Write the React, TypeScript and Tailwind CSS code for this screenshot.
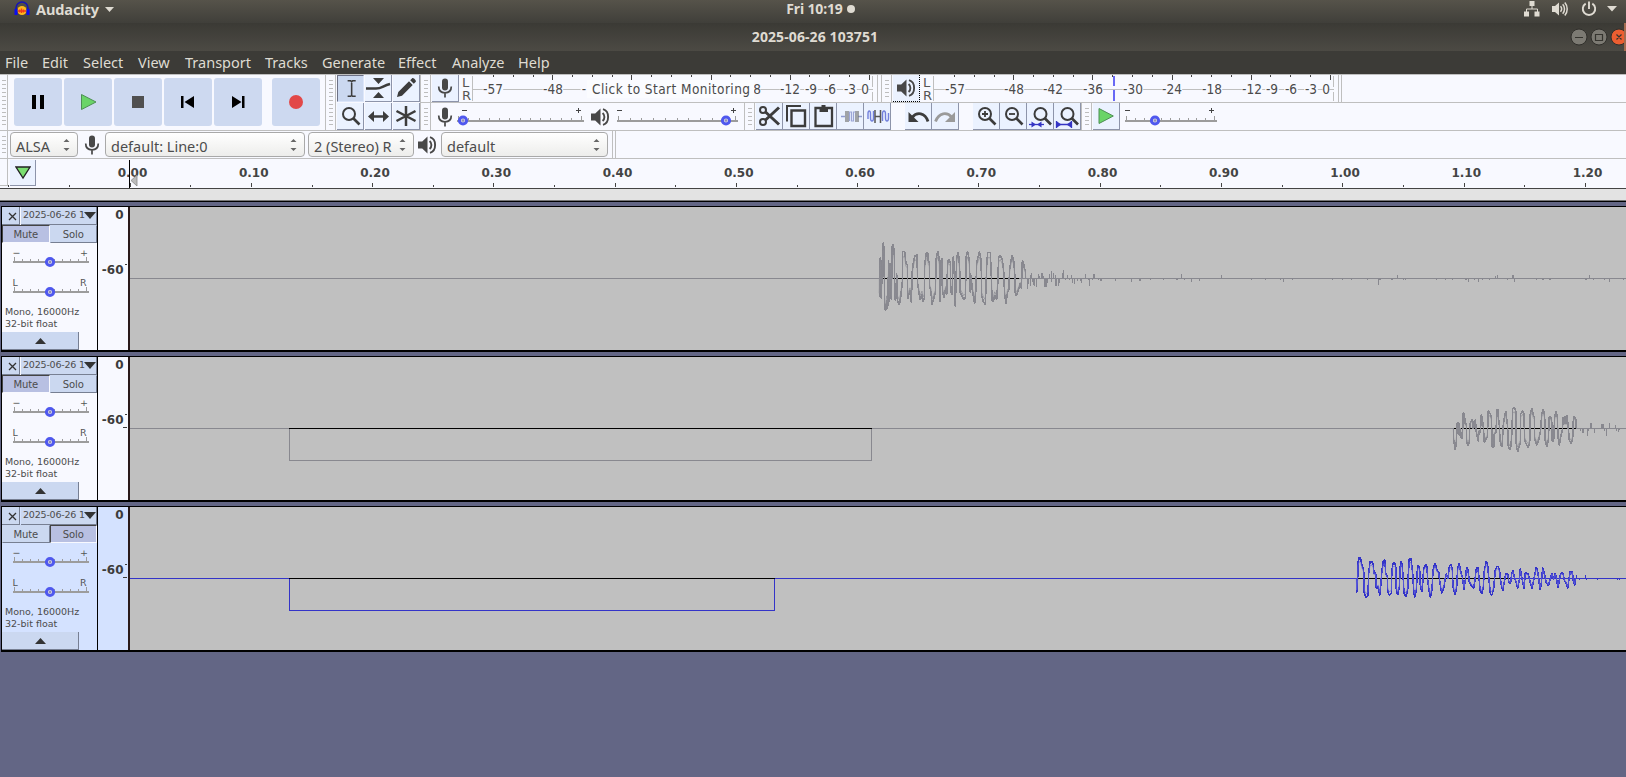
import clsx from "clsx";
import type { ReactNode } from "react";

type Bar = [x: number, dy: number, w?: number];

const menuItems = [
  { label: "File", width: "w-[37px]" },
  { label: "Edit", width: "w-[41px]" },
  { label: "Select", width: "w-[55px]" },
  { label: "View", width: "w-[47px]" },
  { label: "Transport", width: "w-[80px]" },
  { label: "Tracks", width: "w-[57px]" },
  { label: "Generate", width: "w-[76px]" },
  { label: "Effect", width: "w-[54px]" },
  { label: "Analyze", width: "w-[66px]" },
  { label: "Help", width: "w-[40px]" },
];

// Waveform points use three units per pixel, relative to (originX, zero line)
const speechA =
  "58,0 58,55 61,-63 64,61 68,-97 70,-108 72,-87 74,90 77,97 80,65 83,90 86,-55 88,70 91,-47 94,65 97,-100 100,-102 103,-70 104,55 107,67 110,-15 112,65 118,79 122,57 127,10 128,-81 134,-81 138,-45 142,-40 143,61 150,35 154,72 157,-25 160,-47 164,-67 171,-72 173,15 177,43 181,64 186,47 189,70 193,59 194,-39 199,-78 203,-77 205,-53 208,-47 209,25 213,40 216,79 221,60 226,45 229,-65 234,-83 238,-53 239,41 241,71 244,-57 247,-59 248,40 252,59 257,30 260,50 263,-48 266,-57 271,-47 272,35 276,49 280,-67 283,-30 286,85 290,-60 293,-78 296,-70 299,-35 300,40 305,50 311,64 316,57 319,-69 323,-81 328,-53 331,43 334,-10 336,30 344,75 348,30 350,-47 358,-81 362,-65 364,-20 365,53 370,69 376,79 380,-37 383,-78 391,-78 394,-5 396,65 400,70 404,50 410,65 413,20 416,-62 421,-71 427,-55 431,-25 434,50 438,75 443,40 446,37 449,-27 453,-55 457,-69 461,-53 464,-20 466,47 469,52 475,35 481,15 484,30 487,-53 490,-50 494,-27 496,-27 497,0";

const speechB =
  "70,0 71,35 74,55 76,63 79,40 82,-18 86,-18 88,22 91,0 94,28 97,30 100,-48 103,-45 106,-12 109,-15 110,40 114,51 118,40 119,0 121,-18 126,-27 128,-27 129,0 133,-5 136,-27 139,10 145,39 147,7 151,13 154,-42 157,-30 160,-5 163,42 169,30 172,25 175,-54 180,-45 184,-35 187,57 191,57 193,15 198,13 201,-55 203,-59 205,-37 208,-10 210,35 214,53 217,55 219,-5 222,-27 227,-53 230,-30 233,-5 234,50 239,65 243,53 246,5 248,-60 254,-62 258,-50 259,53 263,70 268,53 271,45 272,-43 278,-53 282,-43 284,35 290,50 295,57 299,45 301,-45 306,-62 310,-40 313,-35 314,30 320,51 326,35 332,5 335,-43 340,-58 344,-40 345,35 351,55 355,35 358,-37 362,-35 365,-25 367,40 371,35 374,-35 378,-53 382,-35 384,25 388,51 392,25 397,5 400,-35 402,-15 405,-37 408,-15 411,-39 414,-13 415,3 418,35 424,45 428,30 430,-25 433,-37 437,-30 439,0";

const speechC =
  "79,0 80,43 83,5 84,-50 88,-63 92,-60 96,-40 101,-25 103,45 108,57 114,50 116,-15 120,-50 126,-50 130,-40 132,-15 137,-18 139,30 145,25 149,51 152,25 155,-15 160,-53 165,-55 167,-15 172,-5 173,35 177,50 184,45 185,-5 188,-43 193,-47 197,-40 199,35 203,50 208,25 211,-40 214,-53 217,-35 220,5 222,45 228,55 233,35 235,-15 238,-60 243,-60 248,-15 251,35 254,57 259,35 262,-25 265,-40 269,-30 270,15 275,40 278,15 281,-30 287,-42 291,-35 293,5 297,35 301,57 306,35 309,-25 315,-47 321,-25 326,-20 330,15 335,45 342,25 345,5 349,-15 354,0 358,-35 363,-43 367,-25 369,25 375,50 380,25 383,-30 388,-47 391,-25 397,-5 402,33 406,5 410,-35 414,-25 418,10 425,23 431,30 435,5 438,-25 443,-35 447,-5 450,35 455,47 460,25 463,-25 469,-53 473,-40 477,5 481,45 486,50 491,30 496,-25 500,-35 505,-37 509,-20 513,15 518,37 523,10 527,-13 533,-13 537,13 542,13 545,-15 549,-25 553,-5 558,10 563,30 568,5 571,-30 574,-10 578,10 582,30 586,-17 595,-13 600,10 606,30 610,10 615,-15 619,-35 624,-17 630,35 634,15 638,-33 643,-15 648,10 655,23 660,5 666,-17 671,3 676,-17 680,5 684,28 688,5 692,-15 699,-17 703,5 708,13 713,30 717,3 721,-23 724,-15 727,-23 730,7 734,21 736,0";

const tailA: Bar[] = [
  [502, 31], [506, 18], [511, -12], [511, 22], [515, -18], [517, 10], [520, 20], [525, 22], [529, 26], [535, -15],
  [539, -8], [546, -18, 6], [550, -8], [554, 25], [559, 25, 6], [563, 14], [569, -15], [574, -24], [576, 12], [582, -18],
  [586, -12], [587, 22, 6], [595, 22], [598, 15], [607, -18], [610, -27], [616, 6], [622, -12], [628, 6], [634, -12],
  [638, 15], [643, 17], [652, 9], [661, 8], [664, 13], [676, -15], [685, 6], [688, 22], [697, 5], [702, -13, 6],
  [715, 6], [722, 7, 6], [766, 7], [814, 10], [839, 7, 6], [871, 4], [911, 6], [950, 6, 6], [973, 6], [995, 12],
  [1018, 9], [964, -15], [1084, -12], [1174, 6], [1216, 6], [1261, 6], [1270, 12], [1297, 6], [1419, 6], [1447, 6],
  [1474, 6], [1522, 6], [1555, 21], [1560, 6, 6], [1596, 6, 6], [1612, -12], [1630, 6], [1636, 6], [1729, 4],
  [1756, 6], [1777, 6], [1817, 6, 6], [1825, 12], [1843, 6], [1855, 12], [1867, 6], [1888, 6], [1906, -9],
  [1912, -12], [1942, 6], [1959, -12, 6], [1963, 12], [2029, 6], [2048, 6, 6], [2069, 6, 6], [2177, 6, 6],
  [2188, -12], [2200, 6], [2233, 6], [2248, 12], [2290, 6],
];

const tailB: Bar[] = [
  [452, 8], [459, 13, 6], [473, 24], [477, 7], [482, -18, 6], [493, 13], [517, -15, 9], [524, 8], [529, 22],
  [538, -16], [556, -12], [560, 7], [565, 12], [570, 6],
];

const tailC: Bar[] = [[739, -12], [748, 6], [766, -12], [769, 6], [802, 6], [862, 6], [868, 6]];

type Track = {
  id: number;
  muted: boolean;
  solo: boolean;
  selected: boolean;
  color: string;
  rms: string;
  originX: number;
  points: string;
  tail: Bar[];
  voiced: [number, number];
  block?: [number, number];
};

const tracks: Track[] = [
  { id: 1, muted: true, solo: false, selected: false, color: "#88888f", rms: "#8c8c93", originX: 860, points: speechA, tail: tailA, voiced: [883, 1019] },
  { id: 2, muted: true, solo: false, selected: false, color: "#88888f", rms: "#8c8c93", originX: 1430, points: speechB, tail: tailB, voiced: [1454, 1576], block: [289, 871] },
  { id: 3, muted: false, solo: true, selected: true, color: "#3434c8", rms: "#6464dc", originX: 1330, points: speechC, tail: tailC, voiced: [1358, 1512], block: [289, 774] },
];

/* ---------- icons ---------- */

function MicIcon() {
  return (
    <svg width="16" height="20" viewBox="0 0 16 20">
      <rect x="5" y="0.5" width="6" height="12" rx="3" fill="#484848" />
      <path d="M1.7 8.5c0 4 2.6 6.3 6.3 6.3s6.3-2.3 6.3-6.3M8 15v4.5" fill="none" stroke="#484848" strokeWidth="1.7" />
    </svg>
  );
}

function SpeakerIcon() {
  return (
    <svg width="20" height="20" viewBox="0 0 20 20">
      <path d="M1 6.5h4.2L10.5 1.5v17L5.2 13.5H1z" fill="#484848" />
      <path d="M12.6 6c2.4 2 2.4 6 0 8M13 2.2c6.8 2 6.8 13.6 0 15.6" fill="none" stroke="#484848" strokeWidth="1.9" />
    </svg>
  );
}

function PlayIcon({ size = 18 }: { size?: number }) {
  return (
    <svg width={size} height={size} viewBox="0 0 18 18">
      <path d="M2 1.5 16.3 9 2 16.5z" fill="#6ad468" stroke="#4d8f54" strokeWidth="1" />
    </svg>
  );
}

function Magnifier({ children, cx = 12, cy = 11 }: { children?: ReactNode; cx?: number; cy?: number }) {
  return (
    <svg width="26" height="26" viewBox="0 0 26 26">
      <circle cx={cx} cy={cy} r="6" fill="none" stroke="#3c3c3c" strokeWidth="2" />
      <path d={`M${cx + 4} ${cy + 4}l6.500 6.500`} stroke="#3c3c3c" strokeWidth="2.6" />
      {children}
    </svg>
  );
}

function Icon({ children }: { children: ReactNode }) {
  return (
    <svg width="26" height="26" viewBox="0 0 26 26" fill="none" stroke="#3c3c3c" strokeWidth="2">
      {children}
    </svg>
  );
}

/* ---------- toolbar parts ---------- */

function Grip({ tall = false, end = true }: { tall?: boolean; end?: boolean }) {
  return (
    <div className={clsx("flex shrink-0 items-center justify-center border-[#bfbfbf]", tall ? "h-[55px]" : "h-[27px]", end ? "w-[11px] border-x" : "w-2 border-r")}>
      <svg width="4" height={tall ? 46 : 18} shapeRendering="crispEdges">
        {Array.from({ length: tall ? 12 : 5 }, (_, i) => (
          <rect key={i} x="0" y={i * 4} width="4" height="1" fill="#bdbdbd" />
        ))}
      </svg>
    </div>
  );
}

function ToolButton({ children, active = false, dotted = false }: { children: ReactNode; active?: boolean; dotted?: boolean }) {
  return (
    <button
      className={clsx(
        "flex h-[27px] w-[27px] shrink-0 items-center justify-center border-r border-b",
        active ? "border-[#dce6fa] border-t border-l border-t-[#6d7185] border-l-[#6d7185] bg-[#cbd8f0]" : "bg-[#ebf2ff]",
        !active && (dotted ? "border-dotted border-black" : "border-[#8d94aa]"),
      )}
    >
      {children}
    </button>
  );
}

function Slider({ width, start, end, thumb, ticks, minus = 2, plus }: { width: number; start: number; end: number; thumb: number; ticks: number; minus?: number; plus: number }) {
  return (
    <svg className="shrink-0" width={width} height="27" shapeRendering="crispEdges">
      <rect x={minus} y="7" width="5" height="1" fill="#444" />
      <rect x={plus - 2} y="7" width="5" height="1" fill="#444" />
      <rect x={plus} y="5" width="1" height="5" fill="#444" />
      <rect x={start} y="17" width={end - start} height="2" fill="#9c9c9c" />
      {Array.from({ length: ticks }, (_, i) => {
        const major = i === 0 || i === ticks - 1;
        return <rect key={i} x={Math.round(start + 1 + (i * (end - start - 4)) / (ticks - 1))} y={major ? 13 : 15} width="1" height={major ? 4 : 2} fill="#9c9c9c" />;
      })}
      <circle cx={thumb} cy="17.500" r="3.6" fill="#d5d5e5" stroke="#4f58ee" strokeWidth="3" shapeRendering="auto" />
      <circle cx={thumb} cy="17.500" r="1.2" fill="#8d8db8" shapeRendering="auto" />
    </svg>
  );
}

type MeterLabel = [x: number, text: string];

function Meter({ labels, blue, monitor }: { labels: MeterLabel[]; blue?: number; monitor?: boolean }) {
  return (
    <svg className="shrink-0" width="401" height="27" fontFamily='"DejaVu Sans Condensed", "DejaVu Sans"' fontStretch="condensed" fontSize="13.500" fill="#4b4b4b">
      <g shapeRendering="crispEdges">
        <path d="M0.5 1v25M0 14.5h401M400.5 1v11M400.5 17v9" stroke="#bfbfbf" fill="none" />
        {Array.from({ length: 20 }, (_, i) => (
          <rect key={i} x={Math.round(21 + i * 19.78)} y="0" width="1" height={i % 4 === 3 ? 5 : 2} fill="#444" />
        ))}
      </g>
      {labels.map(([x, text]) => (
        <g key={text}>
          <rect x={x - text.length * 3.4} y="6" width={text.length * 6.8} height="15" fill="#f8f9ff" />
          <text x={x} y="18.500" textAnchor="middle">{text}</text>
        </g>
      ))}
      {blue && <path d={`M${blue} 1v10M${blue} 15v11`} stroke="#6969f5" strokeWidth="2" shapeRendering="crispEdges" />}
      {monitor && (
        <g>
          <rect x="115" y="5" width="167" height="18" fill="#fbfcff" />
          <text x="120" y="18.500" textLength="158">Click to Start Monitoring</text>
        </g>
      )}
    </svg>
  );
}

function ChannelLetters() {
  return (
    <div className="flex h-[27px] w-[14px] shrink-0 flex-col justify-center pl-[3px] font-['DejaVu_Sans'] text-[13px] leading-[13px] text-[#555]">
      <span>L</span>
      <span>R</span>
    </div>
  );
}

function Select({ label, width }: { label: string; width: string }) {
  return (
    <div className={clsx("flex h-[25px] shrink-0 items-center justify-between rounded-[4px] border border-[#a9a9a9] bg-linear-to-b from-white to-[#ededeb] pr-[7px] pl-[5px]", width)}>
      <span className="mt-[2px] text-[14.5px] leading-5 whitespace-nowrap text-[#4c4c4c]">{label}</span>
      <svg className="ml-1 shrink-0" width="7" height="14" viewBox="0 0 7 14" fill="#666">
        <path d="M0.5 4 3.5 1l3 3zM0.5 10 3.5 13l3-3z" />
      </svg>
    </div>
  );
}

/* ---------- window chrome ---------- */

function TopBar() {
  return (
    <div className="flex h-[23px] items-center justify-between bg-linear-to-b from-[#56534a] to-[#403f3a] pr-[9px] pb-[5px] pl-[14px] text-[#dfdbd2]">
      <div className="flex w-[300px] items-center">
        <svg width="16" height="16" viewBox="0 0 16 16">
          <path d="M2 11V7a6 6 0 0 1 12 0v4" fill="none" stroke="#1715b5" strokeWidth="1.6" />
          <circle cx="8" cy="9.5" r="4.6" fill="#ffb81c" />
          <path d="M4 10h8M5.5 8.5v3M7.5 7.5v4.5M9.5 8.5v3" stroke="#ef3a1c" strokeWidth="1.4" />
          <path d="M2 8v6M14 8v6" stroke="#0c0cf0" strokeWidth="3" />
        </svg>
        <span className="ml-[6px] text-[14.5px] leading-5 font-bold tracking-[-0.1px]">Audacity</span>
        <svg className="ml-[6px]" width="9" height="5"><path d="M0 0h9L4.5 5z" fill="#dfdbd2" /></svg>
      </div>
      <div className="ml-[10px] flex items-center gap-1 text-[14px] leading-5 font-bold tracking-[-0.15px]">
        Fri 10:19
        <span className="size-2 rounded-full bg-[#dfdbd2]" />
      </div>
      <div className="flex w-[300px] items-center justify-end">
        <svg width="16" height="16" viewBox="0 0 16 16" fill="#dfdbd2">
          <path d="M5.5 0h5v5h-5zM0 10.5h5v5H0zM10.5 10.5h5v5h-5z" />
          <path d="M8 5v3M2.5 11V8h11v3" fill="none" stroke="#dfdbd2" />
        </svg>
        <svg className="ml-3" width="16" height="16" viewBox="0 0 16 16" fill="none" stroke="#dfdbd2" strokeWidth="1.5">
          <path d="M0 5h3l4-3.5v13L3 11H0z" fill="#dfdbd2" stroke="none" />
          <path d="M8.5 5.3c1.3 1.5 1.3 3.9 0 5.4M10.7 3.2c2.4 2.6 2.4 7 0 9.6M12.8 1.5c3.2 3.6 3.2 9.4 0 13" />
        </svg>
        <svg className="ml-[13px]" width="16" height="16" viewBox="0 0 16 16" fill="none" stroke="#dfdbd2" strokeWidth="1.9">
          <path d="M8 0.5v7.5M4.7 2.6a6.2 6.2 0 1 0 6.6 0" />
        </svg>
        <svg className="ml-[10px]" width="10" height="6"><path d="M0 0h10L5 5.5z" fill="#dfdbd2" /></svg>
      </div>
    </div>
  );
}

function TitleBar() {
  return (
    <div className="relative flex h-7 items-center justify-center bg-linear-to-b from-[#3b3a35] to-[#4c4a44] pb-px pl-1 text-[14px] font-bold tracking-[0.1px] text-[#dfdbd2]">
      2025-06-26 103751
      <svg className="absolute top-0 right-0" width="56" height="28" fill="none">
        <circle cx="9" cy="14" r="8" fill="#7c7a73" stroke="#302f2b" />
        <circle cx="29" cy="14" r="8" fill="#7c7a73" stroke="#302f2b" />
        <circle cx="49" cy="14" r="8" fill="#ec5e31" stroke="#302f2b" />
        <path d="M5 14.5h8M25.5 11.5h7v6h-7zM46.5 11.5l5 5M51.5 11.5l-5 5" stroke="#35342f" strokeWidth="1.2" />
        <path d="M55 0v28" stroke="#a36b50" strokeWidth="2" />
      </svg>
    </div>
  );
}

const transportIcons = [
  <path key="pause" d="M11 10h4v14h-4zM19 10h4v14h-4z" fill="#000" transform="translate(7 0)" />,
  <path key="play" d="M17.5 9.5 32 17l-14.500 7.500z" fill="#6ad468" stroke="#4d8f54" />,
  <rect key="stop" x="18" y="11" width="12" height="12" fill="#505050" />,
  <path key="start" d="M17 11h2.500v12H17zM30 11v12l-9.500-6z" fill="#000" />,
  <path key="end" d="M28 11h2.500v12H28zM18 11v12l9.500-6z" fill="#000" />,
  <circle key="record" cx="24" cy="17" r="7" fill="#e24848" />,
];

function TransportBar() {
  return (
    <div className="flex h-[55px] w-[325px] shrink-0 items-center">
      <Grip tall end={false} />
      <div className="flex gap-[2px] pb-px pl-[6px]">
        {transportIcons.map((icon, i) => (
          <button key={i} className={clsx("size-12 rounded-[3px] bg-[#cdd9f0]", i === 5 && "ml-2")}>
            <svg width="48" height="48" viewBox="0 -7 48 48">{icon}</svg>
          </button>
        ))}
      </div>
    </div>
  );
}

function ToolsBar() {
  return (
    <div className="grid w-[84px] shrink-0 grid-cols-3 gap-px pl-px">
      <ToolButton active>
        <Icon><path d="M10 4.500h3.200l1 1 1-1h3.200M14.200 5v15M10 20.500h3.200l1-1 1 1h3.200" strokeWidth="1.6" /></Icon>
      </ToolButton>
      <ToolButton>
        <Icon>
          <path d="M8 3h11l-5.500 6zM8 23h11l-5.500-6z" fill="#3c3c3c" stroke="none" />
          <path d="M1 13.500h10c6 0 7-3 14-4.500" strokeWidth="2.500" />
        </Icon>
      </ToolButton>
      <ToolButton>
        <Icon><path d="M4 22l1.300-5L16 6.300l3.700 3.700L9 20.700zM17.200 5.200l2-2c1-.7 4.500 2.300 3.600 3.600l-2 2z" fill="#3c3c3c" stroke="none" /></Icon>
      </ToolButton>
      <ToolButton><Magnifier /></ToolButton>
      <ToolButton>
        <Icon><path d="M7 13.500h13" strokeWidth="2.500" /><path d="M3 13.500l6-5.500v11zM24 13.500l-6-5.500v11z" fill="#3c3c3c" stroke="none" /></Icon>
      </ToolButton>
      <ToolButton>
        <Icon><path d="M13 3v20M3.500 8l19 10M22.500 8l-19 10" strokeWidth="2.500" /></Icon>
      </ToolButton>
    </div>
  );
}

function MeterRow() {
  return (
    <div className="flex h-[27px] items-center">
      <Grip />
      <div className="ml-px"><ToolButton><MicIcon /></ToolButton></div>
      <ChannelLetters />
      <div className="-ml-px">
        <Meter
          monitor
          labels={[[21, "-57"], [81, "-48"], [112, "-"], [285, "8"], [318, "-12"], [339, "-9"], [358, "-6"], [378, "-3"], [393, "0"]]}
        />
      </div>
      <div className="ml-1 h-[27px] w-px bg-[#bfbfbf]" />
      <div className="ml-[3px] flex"><Grip /></div>
      <div className="ml-px"><ToolButton dotted><SpeakerIcon /></ToolButton></div>
      <ChannelLetters />
      <div className="-ml-px">
        <Meter
          blue={181}
          labels={[[22, "-57"], [81, "-48"], [120, "-42"], [160, "-36"], [200, "-30"], [239, "-24"], [279, "-18"], [319, "-12"], [339, "-9"], [358, "-6"], [378, "-3"], [393, "0"]]}
        />
      </div>
      <div className="ml-1 h-[27px] w-1 border-x border-[#bfbfbf]" />
    </div>
  );
}

function EditRow() {
  return (
    <div className="flex h-[27px] items-center">
      <Grip />
      <div className="ml-[6px]"><MicIcon /></div>
      <Slider width={132} start={4} end={131} thumb={10} ticks={13} minus={9} plus={125} />
      <div className="ml-[5px]"><SpeakerIcon /></div>
      <Slider width={134} start={7} end={128} thumb={116} ticks={11} minus={7} plus={123} />
      <Grip />
      <div className="ml-px flex">
        <ToolButton>
          <Icon>
            <circle cx="7" cy="7" r="3" /><circle cx="7" cy="19" r="3" />
            <path d="M9.500 9 23 21.500M9.500 17 23 4.500" strokeWidth="3" />
          </Icon>
        </ToolButton>
        <ToolButton>
          <Icon><path d="M4 18.500V3h14" /><path d="M8.500 7.500h13.500v15.500h-13.500z" strokeWidth="2.400" /></Icon>
        </ToolButton>
        <ToolButton>
          <Icon><path d="M5.500 5h16.500v18h-16.500z" strokeWidth="2.300" /><path d="M9.500 4h8.500v5H9.500zM11.500 2h4v3h-4z" fill="#3c3c3c" stroke="none" /></Icon>
        </ToolButton>
        <ToolButton>
          <Icon>
            <path d="M4 13.500h4M21 13.500h4" stroke="#8e9ad0" strokeWidth="1.500" />
            <path d="M9 8v11M11 8v11M19 8v11M21 8v11" stroke="#777" strokeWidth="1.300" />
            <path d="M12.500 18V9h2v9h2V9h2" stroke="#9ba5d6" strokeWidth="1.200" />
          </Icon>
        </ToolButton>
        <ToolButton>
          <Icon>
            <path d="M4 16v-5c0-4 2.500-4 2.500 0v4c0 4 3 4 3 0V8M18.500 18v-7c0-4 3-4 3 0v4c0 4 3 4 3 0v-5" stroke="#7280dc" strokeWidth="1.400" />
            <path d="M11 7v13M16.500 7v13M11 13.500h5.500" stroke="#555" strokeWidth="1.500" />
          </Icon>
        </ToolButton>
      </div>
      <div className="ml-[14px] flex">
        <ToolButton>
          <Icon><path d="M7 14.500c5-6 13-5 16 4" strokeWidth="2.800" /><path d="M3.500 9v10h10z" fill="#3c3c3c" stroke="none" /></Icon>
        </ToolButton>
        <ToolButton>
          <Icon><path d="M20 14.500c-5-6-13-5-16.500 4" stroke="#9a9a9a" strokeWidth="2.800" /><path d="M23 9v10H13z" fill="#9a9a9a" stroke="none" /></Icon>
        </ToolButton>
      </div>
      <div className="ml-[14px] flex">
        <ToolButton><Magnifier><path d="M9 11h6M12 8v6" stroke="#3c3c3c" strokeWidth="1.800" /></Magnifier></ToolButton>
        <ToolButton><Magnifier><path d="M9 11h6" stroke="#3c3c3c" strokeWidth="1.800" /></Magnifier></ToolButton>
        <ToolButton>
          <Magnifier cx={13.5}>
            <path d="M2 21.500h15" stroke="#3535c4" strokeWidth="1.300" />
            <path d="M4.500 18.500l4.500 3-4.500 3zM14.500 18.500l-4.500 3 4.500 3z" fill="#3535c4" />
          </Magnifier>
        </ToolButton>
        <ToolButton>
          <Magnifier cx={13.5}>
            <path d="M2 21.500h15M2.500 18v7M17.500 18v7" stroke="#3535c4" strokeWidth="1.300" />
            <path d="M3 18.500l4.500 3-4.500 3zM17 18.500l-4.500 3 4.500 3z" fill="#3535c4" />
          </Magnifier>
        </ToolButton>
      </div>
      <Grip />
      <div className="ml-px"><ToolButton><PlayIcon /></ToolButton></div>
      <Slider width={104} start={5} end={97} thumb={35} ticks={11} minus={5} plus={91} />
    </div>
  );
}

function DeviceBar() {
  return (
    <div className="flex h-7 items-center border-b border-[#bfbfbf]">
      <Grip end={false} />
      <div className="flex items-center pl-[2px]">
        <Select label="ALSA" width="w-[68px]" />
        <div className="mr-[5px] ml-[6px]"><MicIcon /></div>
        <Select label="default: Line:0" width="w-[200px]" />
        <div className="ml-[3px]"><Select label="2 (Stereo) R" width="w-[106px]" /></div>
        <div className="mr-1 ml-[3px]"><SpeakerIcon /></div>
        <Select label="default" width="w-[167px]" />
      </div>
      <div className="ml-1 h-[27px] w-1 border-x border-[#bfbfbf]" />
    </div>
  );
}

function TimeRuler() {
  return (
    <div className="flex h-[30px] border-b border-[#444] bg-[#f8f9ff]">
      <div className="h-[27px] w-2 shrink-0 border-r border-b border-[#bfbfbf]" />
      <button className="mt-px ml-[2px] flex h-[26px] w-[26px] shrink-0 items-center justify-center border-r border-b border-[#8d94aa] bg-[#ebf2ff]">
        <svg width="16" height="14"><path d="M1 1h14L8 12z" fill="#7ade70" stroke="#222" strokeWidth="1.300" /></svg>
      </button>
      <svg className="-ml-9 shrink-0" width="1626" height="29" fontFamily='"DejaVu Sans"' fontWeight="700" fontSize="12" fill="#444">
        {Array.from({ length: 27 }, (_, i) => {
          const x = Math.floor(8.9 + i * 60.63);
          const major = i % 2 === 0 && i > 0;
          return <rect key={i} x={x} y={major ? 24 : 26} width="1" height={major ? 4 : 2} />;
        })}
        {Array.from({ length: 13 }, (_, i) => (
          <text key={i} x={132.500 + i * 121.250} y="18" textAnchor="middle">{(i / 10).toFixed(2)}</text>
        ))}
        <path d="M137 16v11l-6-5.500z" fill="#bbb" stroke="#888" strokeWidth="0.800" />
        <rect x="129" y="1" width="1" height="28" fill="#000" />
      </svg>
    </div>
  );
}

/* ---------- tracks ---------- */

function PanelSlider({ left, right }: { left: string; right: string }) {
  return (
    <svg className="block" width="95" height="30" fontFamily='"DejaVu Sans"' fontSize="9.500" fill="#555">
      <text x="10.500" y="10.500">{left}</text>
      <text x="78" y="10.500">{right}</text>
      <g shapeRendering="crispEdges" fill="#9c9c9c">
        <rect x="11" y="16" width="76" height="2" />
        {Array.from({ length: 10 }, (_, i) => (
          <rect key={i} x={Math.round(12 + i * 8)} y={i % 9 ? 14 : 12} width="1" height={i % 9 ? 2 : 4} />
        ))}
      </g>
      <circle cx="48" cy="17" r="3.600" fill="#d5d5e5" stroke="#4f58ee" strokeWidth="3" />
      <circle cx="48" cy="17" r="1.200" fill="#8d8db8" />
    </svg>
  );
}

function PanelToggle({ label, on }: { label: string; on: boolean }) {
  return (
    <button
      className={clsx(
        "h-[18px] flex-1 border text-[10px] leading-[15px] tracking-[-0.1px]",
        on ? "border-[#f8f9ff] border-t-[#444] border-l-[#444] bg-[#b8c0e2]" : "border-[#cbd8f0] border-r-[#777f92] border-b-[#777f92] bg-[#cbd8f0]",
      )}
    >
      {label}
    </button>
  );
}

function TrackPanel({ track }: { track: Track }) {
  return (
    <div className={clsx("flex w-24 shrink-0 flex-col border-r border-black font-['DejaVu_Sans'] text-[#4c4c4c]", track.selected ? "bg-[#d4e2ff]" : "bg-[#f8f9ff]")}>
      <div className="flex h-[18px] gap-px">
        <button className="flex w-[18px] shrink-0 items-center justify-center border-r border-b border-[#777f92] bg-[#cbd8f0] pt-px pl-[3px]">
          <svg width="9" height="9"><path d="M1 1l7 7M8 1 1 8" stroke="#333" strokeWidth="1.300" /></svg>
        </button>
        <button className="flex flex-1 items-center border-r border-b border-[#777f92] bg-[#cbd8f0] pl-[2px]">
          <span className="text-left text-[9.5px] tracking-[-0.2px] whitespace-nowrap">2025-06-26 1</span>
          <svg className="-ml-px shrink-0" width="12" height="7"><path d="M0 0h12L6 7z" fill="#333" /></svg>
        </button>
      </div>
      <div className="flex">
        <PanelToggle label="Mute" on={track.muted} />
        <PanelToggle label="Solo" on={track.solo} />
      </div>
      <div className="mt-[2px]">
        <PanelSlider left="−" right="+" />
        <PanelSlider left="L" right="R" />
      </div>
      <div className="pt-px pl-[3px] text-[9.5px] leading-[12px] whitespace-nowrap">
        <p>Mono, 16000Hz</p>
        <p>32-bit float</p>
      </div>
      <button className="mt-auto flex h-[18px] w-[77px] items-center justify-center border-r border-b border-[#777f92] bg-[#cbd8f0]">
        <svg width="11" height="6"><path d="M0 6h11L5.500 0z" fill="#333" /></svg>
      </button>
    </div>
  );
}

function Waveform({ track }: { track: Track }) {
  const { color, rms, originX, points, tail, voiced, block } = track;
  return (
    <svg className="block shrink-0" width="1496" height="143" viewBox="130 0 1496 143" shapeRendering="crispEdges">
      <rect x="130" y="71" width="1496" height="1" fill={color} />
      <rect x={voiced[0]} y="71" width={voiced[1] - voiced[0]} height="1" fill="#000" />
      {block && (
        <g>
          <path d={`M${block[0] + 0.5} 71v32.500H${block[1] + 0.5}V71`} fill="none" stroke={color} />
          <rect x={block[0]} y="71" width={block[1] - block[0] + 1} height="1" fill="#000" />
        </g>
      )}
      <g transform={`translate(${originX} 71.500) scale(0.33333)`}>
        <polyline points={points} fill="none" stroke={color} strokeWidth="4.800" strokeLinejoin="bevel" />
        <polyline points={points} fill="none" stroke={rms} strokeWidth="2.400" strokeLinejoin="bevel" transform="scale(1 0.8)" />
        {tail.map(([x, dy, w = 3], i) => (
          <rect key={i} x={x - w / 2} y={Math.min(0, dy)} width={w} height={Math.abs(dy)} fill={color} />
        ))}
      </g>
    </svg>
  );
}

function TrackRow({ track }: { track: Track }) {
  return (
    <div className="mb-1 ml-px flex h-[146px] border-t border-b-2 border-l border-black bg-[#c0c0c0]">
      <TrackPanel track={track} />
      <svg className={clsx("shrink-0", track.selected ? "bg-[#d4e2ff]" : "bg-[#f8f9ff]")} width="32" height="143" fontFamily='"DejaVu Sans"' fontWeight="700" fontSize="12" fill="#3c3c3c">
        <text x="25.500" y="12" textAnchor="end">0</text>
        <text x="25.500" y="66.500" textAnchor="end">-60</text>
        <rect x="27" y="57" width="2" height="1" />
        {track.id > 1 && <rect x="25" y="70" width="4" height="1" />}
        <rect x="30" y="0" width="2" height="143" fill="#2a1a1a" />
      </svg>
      <Waveform track={track} />
    </div>
  );
}

export default function App() {
  return (
    <div className="h-[777px] w-[1626px] overflow-hidden bg-[#636685] font-['Noto_Sans',sans-serif]">
      <TopBar />
      <TitleBar />
      <nav className="flex h-[23px] items-center bg-[#3c3b37] pb-[2px] pl-[5px] text-[14.5px] leading-5 text-[#dfdbd2]">
        {menuItems.map((item) => (
          <span key={item.label} className={clsx("shrink-0 whitespace-nowrap", item.width)}>{item.label}</span>
        ))}
      </nav>

      <div className="border-t border-[#bfbfbf] bg-[#f8f9ff]">
        <div className="flex border-b border-[#bfbfbf]">
          <TransportBar />
          <Grip tall />
          <ToolsBar />
          <div className="flex-1">
            <MeterRow />
            <div className="h-px bg-[#bfbfbf]" />
            <EditRow />
          </div>
        </div>
        <DeviceBar />
        <TimeRuler />
      </div>

      <div className="h-[11px] bg-[#e3e3e3]" />
      <div className="h-[2px] border-t border-[#777] bg-black" />
      <main className="pt-1">
        {tracks.map((track) => (
          <TrackRow key={track.id} track={track} />
        ))}
      </main>
    </div>
  );
}
